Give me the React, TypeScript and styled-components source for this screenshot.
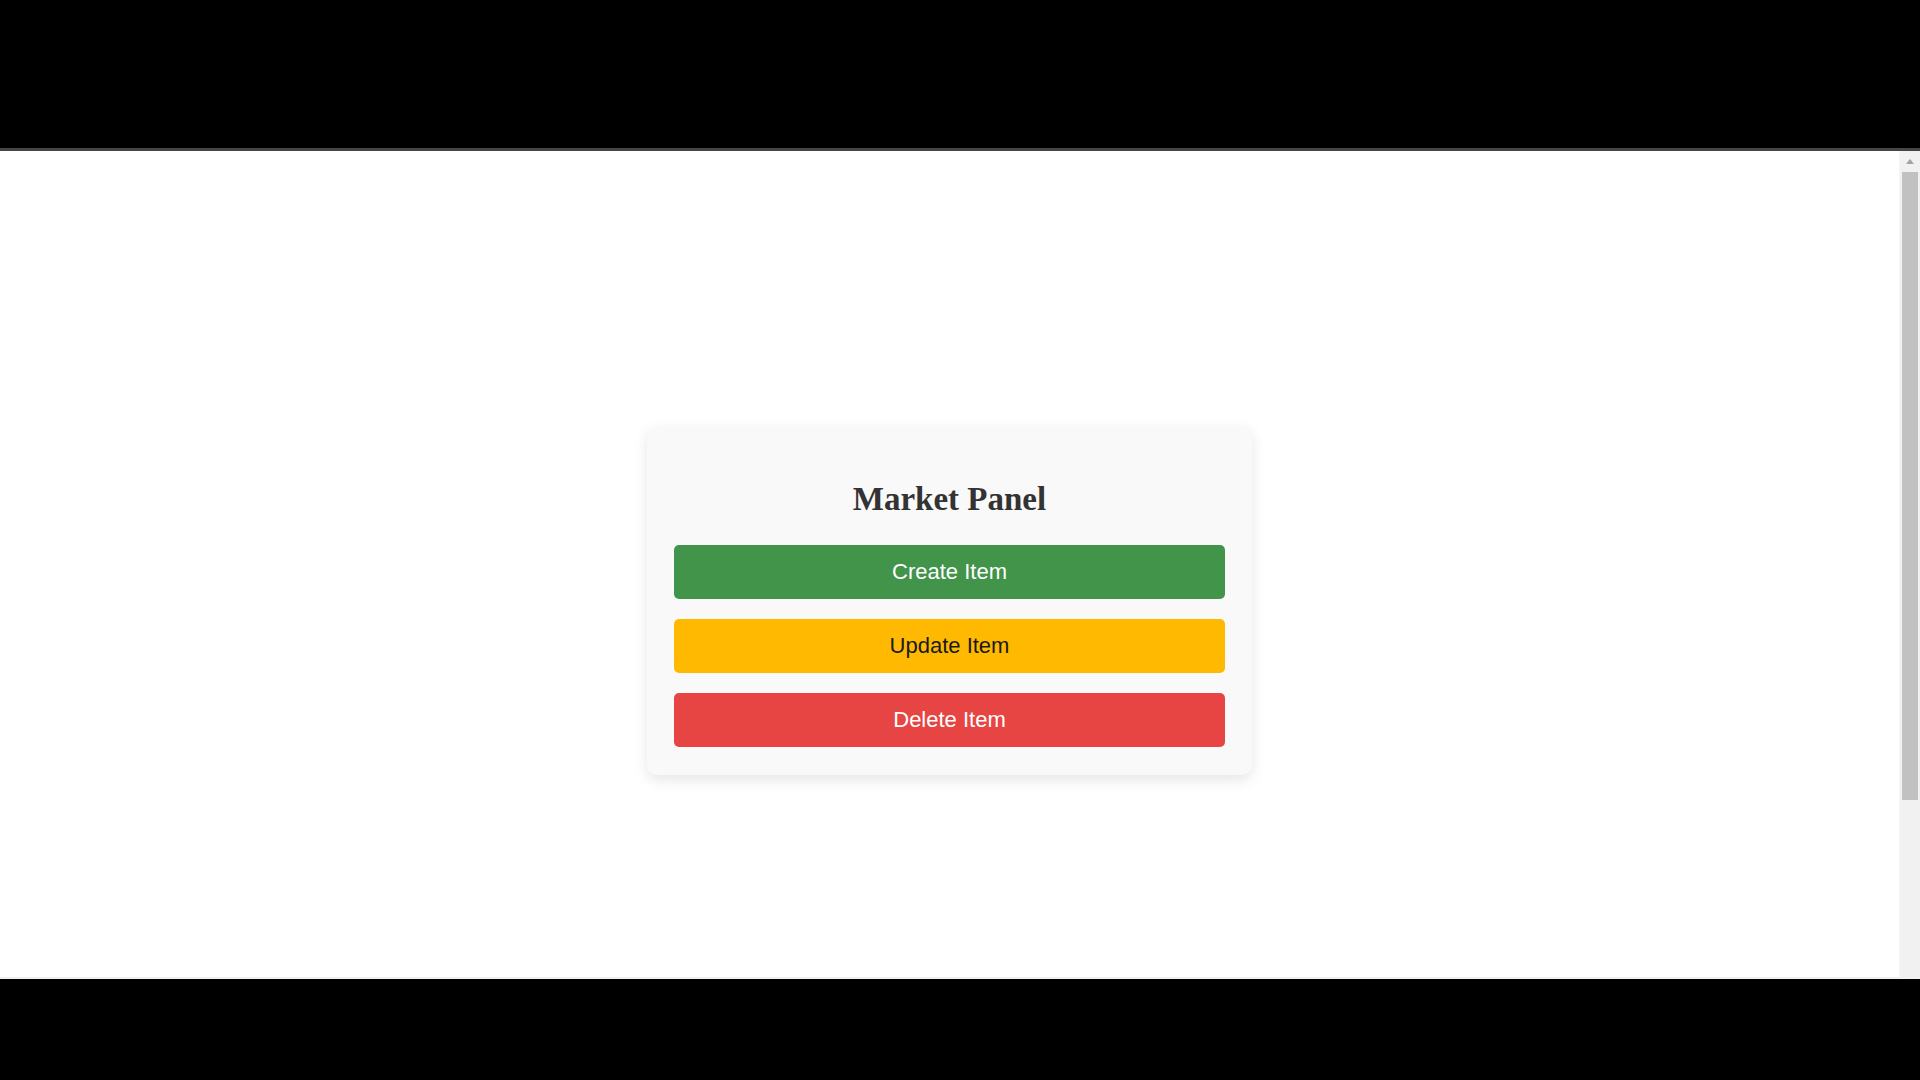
import React from "react"
import styled, { createGlobalStyle } from "styled-components"

const GlobalStyle = createGlobalStyle`
  html, body {
    margin: 0;
    padding: 0;
    height: 100%;
    overflow: hidden;
    background: #000;
  }
  #root {
    height: 100%;
  }
`

const Frame = styled.div`
  height: 1080px;
  display: flex;
  flex-direction: column;
  background: #000;
`

const TopBar = styled.div`
  height: 148px;
  flex-shrink: 0;
  background: #000;
  border-bottom: 3px solid #454545;
`

const Viewport = styled.div`
  height: 828px;
  flex-shrink: 0;
  display: flex;
  background: #fff;
`

const Page = styled.main`
  flex: 1;
  display: flex;
  flex-direction: column;
  align-items: center;
  padding-top: 275px;
  border-bottom: 2px solid #efefef;
  box-sizing: border-box;
`

const Scrollbar = styled.div`
  width: 21px;
  flex-shrink: 0;
  display: flex;
  flex-direction: column;
  align-items: center;
  background: #f1f1f1;
  border-left: 1px solid #f6f6f6;
  box-sizing: border-box;
`

const ArrowUp = styled.div`
  margin-top: 8px;
  width: 0;
  height: 0;
  border-left: 4px solid transparent;
  border-right: 4px solid transparent;
  border-bottom: 5px solid #a3a3a3;
`

const Thumb = styled.div`
  margin-top: 8px;
  width: 16px;
  height: 628px;
  background: #c1c1c1;
`

const BottomBar = styled.div`
  flex: 1;
  background: #000;
`

const Card = styled.section`
  width: 605px;
  box-sizing: border-box;
  padding: 28px 27px;
  background: #f9f9f9;
  border-radius: 10px;
  box-shadow: 0 5px 14px rgba(0, 0, 0, 0.1);
  display: flex;
  flex-direction: column;
`

const Title = styled.h2`
  margin: 25px 0 26px;
  font-family: "Liberation Serif", "Times New Roman", serif;
  font-size: 33px;
  line-height: 40px;
  font-weight: 700;
  color: #333;
  text-align: center;
`

const Actions = styled.div`
  display: flex;
  flex-direction: column;
  gap: 20px;
`

type Tone = "create" | "update" | "delete"

const tones: Record<Tone, { bg: string; fg: string }> = {
  create: { bg: "#41944a", fg: "#fff" },
  update: { bg: "#ffb900", fg: "#1a1a1a" },
  delete: { bg: "#e74543", fg: "#fff" },
}

const ActionButton = styled.button<{ $tone: Tone }>`
  height: 54px;
  width: 100%;
  border: none;
  border-radius: 5px;
  cursor: pointer;
  font-family: "Liberation Sans", Arial, sans-serif;
  font-size: 22px;
  background: ${(p) => tones[p.$tone].bg};
  color: ${(p) => tones[p.$tone].fg};

  &:hover {
    filter: brightness(0.95);
  }
`

const App: React.FC = () => {
  return (
    <>
      <GlobalStyle />
      <Frame>
        <TopBar />
        <Viewport>
          <Page>
            <Card>
              <Title>Market Panel</Title>
              <Actions>
                <ActionButton $tone="create">Create Item</ActionButton>
                <ActionButton $tone="update">Update Item</ActionButton>
                <ActionButton $tone="delete">Delete Item</ActionButton>
              </Actions>
            </Card>
          </Page>
          <Scrollbar>
            <ArrowUp />
            <Thumb />
          </Scrollbar>
        </Viewport>
        <BottomBar />
      </Frame>
    </>
  )
}

export default App
